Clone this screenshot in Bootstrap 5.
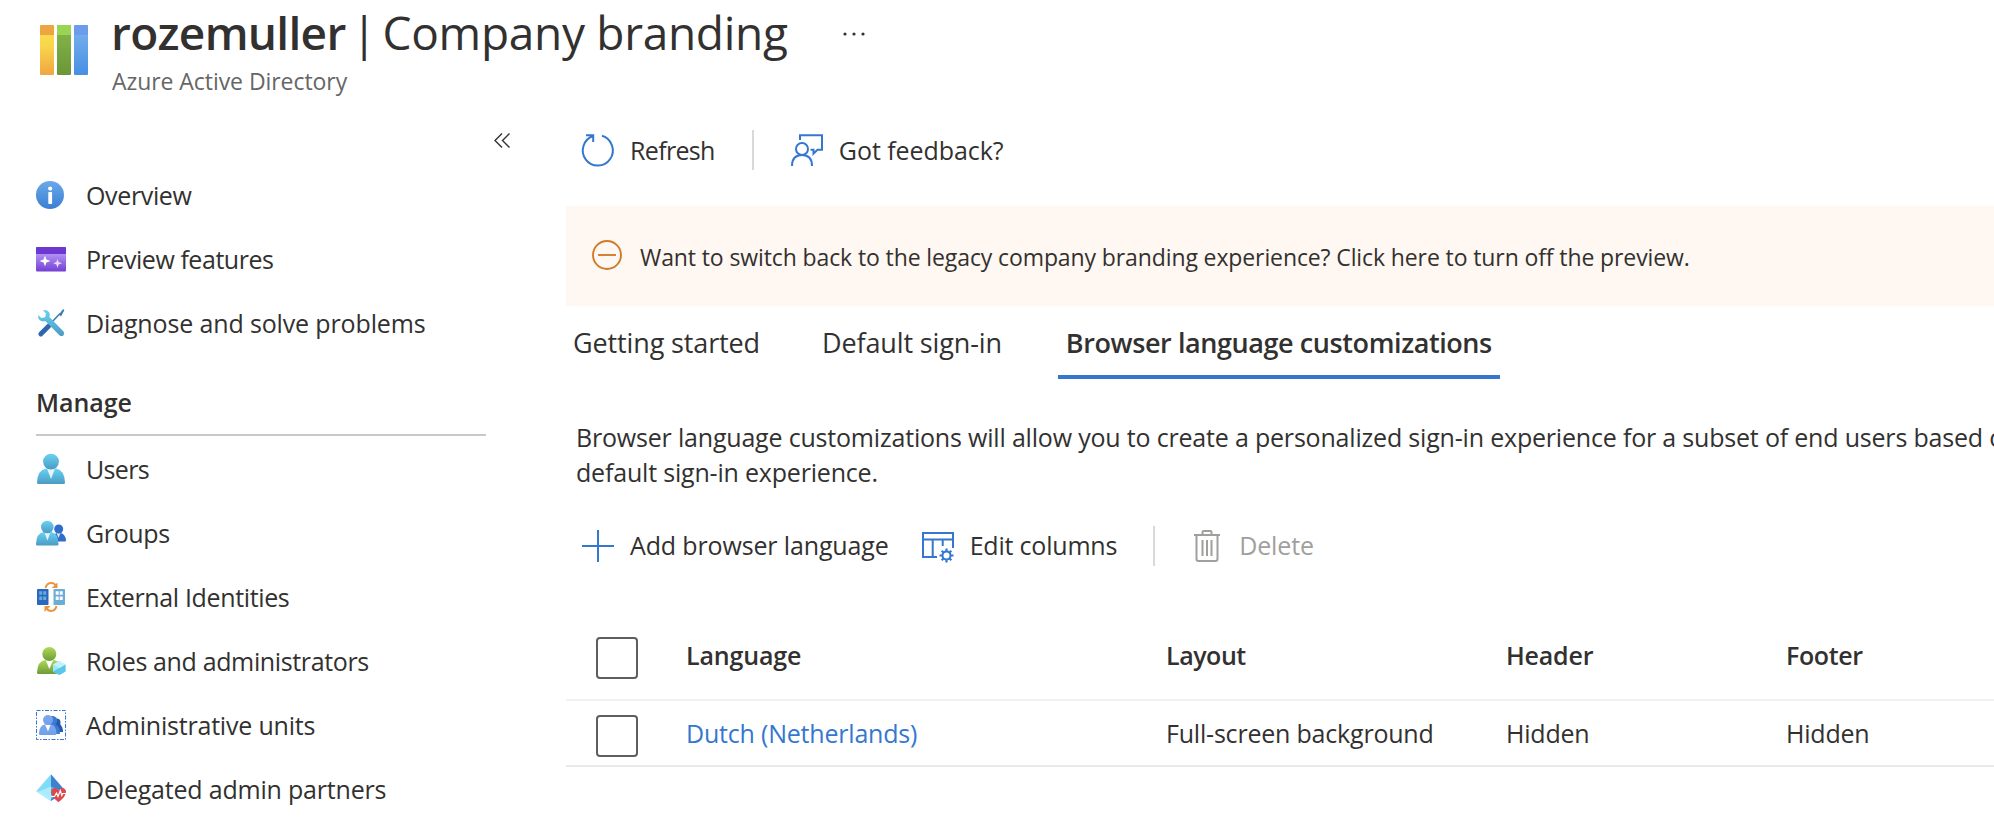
<!DOCTYPE html>
<html lang="en">
<head>
<meta charset="utf-8">
<meta name="viewport" content="width=device-width, initial-scale=1">
<title>rozemuller | Company branding</title>
<link href="https://cdn.jsdelivr.net/npm/bootstrap@5.3.0/dist/css/bootstrap.min.css" rel="stylesheet">
<style>
body{font-family:"Open Sans",sans-serif;font-size:25px;color:#323130;background:#fff;overflow:hidden;height:826px;letter-spacing:-.2px}
svg{display:block;flex:none}
.ls-0{letter-spacing:-.05px}
.ls-1{letter-spacing:-.14px}
.ls-3{letter-spacing:-.36px}
.ls-4{letter-spacing:-.45px}
.ls-6{letter-spacing:-.66px}
.page-head{height:98px;padding-left:40px}
.page-logo{margin:25px 23px 0 0}
.page-title{font-size:46px;line-height:64px;font-weight:400;letter-spacing:-.3px}
.page-title b{font-weight:600;letter-spacing:-.7px}
.page-title .bar{width:37px;text-align:center}
.page-title svg{margin-left:54px;margin-top:4px}
.page-sub{font-size:23px;line-height:34px;color:#666;padding-left:1px;letter-spacing:-.06px}
.side{width:566px;flex:none}
.side-fold{height:65px;padding:35px 0 0 494px}
.side-link{height:64px;padding-left:36px;color:#323130;text-decoration:none}
.side-link svg{margin-right:20px;width:30px;height:30px;overflow:visible}
.side-link span{padding-top:1px}
.side-title{margin:24px 80px 1px 36px;height:57px;font-size:25px;line-height:47px;border-bottom:2px solid #c8c8c8;letter-spacing:-.05px}
.main-pane{min-width:0}
.cmds{height:104px;padding-left:16px}
.cmds.lower{height:60px;margin-top:26px}
.cmd{border:0;background:none;padding:0;color:inherit;letter-spacing:inherit}
.cmd svg{margin-right:16px;overflow:visible}
.cmds:not(.lower) .cmd span{padding-top:2px}
.cmd.off{color:#a19f9d}
.sep{width:2px;height:40px;background:#d9d9d9}
.notice{height:100px;margin-top:4px;background:#fff7f1;padding-left:26px;font-size:23px;letter-spacing:-.11px}
.notice svg{margin:-2px 18px 0 0}
.notice span{padding-top:3px}
.tabs{height:73px}
.tab{font-size:27px;padding:6px 8px 0;border-bottom:4px solid transparent;letter-spacing:-.13px}
.tab.on{border-color:#3577d0;letter-spacing:-.41px}
.intro{margin:41px 0 0 10px;line-height:35px;letter-spacing:-.19px}
.grid-tbl{table-layout:fixed;width:1428px;margin:35px 0 0}
.grid-tbl th,.grid-tbl td{padding:0;vertical-align:middle;line-height:35px;color:#323130;font-weight:400}
.grid-tbl th{font-weight:600}
.grid-tbl thead tr{height:89px;border-bottom:2px solid #f1f1f1}
.grid-tbl tbody tr{height:66px;border-bottom:2px solid #eaeaea}
.grid-tbl a{color:#3577d0;text-decoration:none}
.box{display:block;width:42px;height:42px;border:2px solid #605e5c;border-radius:4px;margin:5px 0 0 30px}
thead .box{margin-top:6px}
</style>
</head>
<body>
<header class="page-head d-flex align-items-start">
  <svg class="page-logo" width="48" height="50" viewBox="0 0 48 50">
    <defs>
      <linearGradient id="gy" x1="0" y1="0" x2="0" y2="1"><stop offset="0" stop-color="#f9de4c"/><stop offset=".4" stop-color="#f8d84b"/><stop offset="1" stop-color="#f0a542"/></linearGradient>
      <linearGradient id="gg" x1="0" y1="0" x2="0" y2="1"><stop offset="0" stop-color="#86b94a"/><stop offset="1" stop-color="#6a9637"/></linearGradient>
      <linearGradient id="gb" x1="0" y1="0" x2="0" y2="1"><stop offset="0" stop-color="#7cb4ee"/><stop offset="1" stop-color="#468fe2"/></linearGradient>
      <linearGradient id="gi" x1="0" y1="0" x2="0" y2="1"><stop offset="0" stop-color="#6aa9e9"/><stop offset="1" stop-color="#3b7fd3"/></linearGradient>
      <linearGradient id="gp" x1="0" y1="0" x2="0" y2="1"><stop offset="0" stop-color="#b79af5"/><stop offset=".3" stop-color="#b08ff2"/><stop offset="1" stop-color="#7440d4"/></linearGradient>
      <linearGradient id="gc" x1="0" y1="0" x2="0" y2="1"><stop offset="0" stop-color="#68d3f3"/><stop offset="1" stop-color="#4b9ac3"/></linearGradient>
      <linearGradient id="gr" x1="0" y1="0" x2="0" y2="1"><stop offset="0" stop-color="#b0da57"/><stop offset="1" stop-color="#6d9b38"/></linearGradient>
      <linearGradient id="ga" x1="0" y1="0" x2="0" y2="1"><stop offset="0" stop-color="#7fa9ea"/><stop offset="1" stop-color="#6f9fec"/></linearGradient>
    </defs>
    <rect width="14" height="50" rx="1" fill="url(#gy)"/><path fill="#eea440" d="M1 0h12l1 1v9H0V1z"/>
    <rect x="17" width="14" height="50" rx="1" fill="url(#gg)"/><path fill="#99d553" d="M18 0h12l1 1v9H17V1z"/>
    <rect x="34" width="14" height="50" rx="1" fill="url(#gb)"/><path fill="#6c9ceb" d="M35 0h12l1 1v9H34V1z"/>
  </svg>
  <div>
    <h1 class="page-title d-flex align-items-center m-0"><b>rozemuller</b><span class="bar">|</span><span>Company branding</span>
      <svg width="24" height="6" viewBox="0 0 24 6" fill="#323130"><circle cx="3" cy="3" r="1.6"/><circle cx="12" cy="3" r="1.6"/><circle cx="21" cy="3" r="1.6"/></svg>
    </h1>
    <div class="page-sub">Azure Active Directory</div>
  </div>
</header>

<div class="d-flex">
  <nav class="side">
    <div class="side-fold"><svg width="17" height="15" viewBox="0 0 17 15" fill="none" stroke="#323130" stroke-width="1.4"><path d="M8 .5l-7 7 7 7M15.500 .5l-7 7 7 7"/></svg></div>

    <a class="side-link d-flex align-items-center">
      <svg viewBox="0 0 30 30"><circle cx="14" cy="15" r="14" fill="url(#gi)"/><circle cx="14.200" cy="8.600" r="2.100" fill="#fff"/><rect x="12.300" y="12" width="3.800" height="12" rx=".8" fill="#fff"/></svg>
      <span class="ls-3">Overview</span></a>
    <a class="side-link d-flex align-items-center">
      <svg viewBox="0 0 30 30"><rect y="3" width="30" height="24.500" rx="1" fill="url(#gp)"/><path fill="#6d38cf" d="M0 4q0-1 1-1h28q1 0 1 1v6H0z"/><path fill="#fff" d="M9 11.500l1.400 4.100 4.100 1.400-4.100 1.400L9 22.500l-1.400-4.100L3.500 17l4.100-1.400z"/><path fill="#e6dbfb" d="M21.500 15l1.100 3.100 3.400 1.100-3.400 1.200-1.100 3.600-1.100-3.600-3.100-1.200 3.100-1.100z"/></svg>
      <span class="ls-4">Preview features</span></a>
    <a class="side-link d-flex align-items-center">
      <svg viewBox="0 0 30 30"><path stroke="#2f67ae" stroke-width="4.800" stroke-linecap="round" d="M4.800 26l8-8"/><path stroke="#3a7fb4" stroke-width="1.600" d="M16 14l8-8.500"/><path fill="#3a7fa8" d="M27.800 1.200l.4 1.200-3.200 6-2-2 3.700-4.800z"/><path fill="url(#gc)" d="M7 2.300Q11.500 1 13.300 4.500q1 2.500.1 4.500l14.100 14.500q1.500 2 0 3.700-2 1.800-4 0L9.200 13Q6 14.200 3.500 12 1.600 10 2.200 7l3 3 4-.8.700-3.600z"/></svg>
      <span class="ls-1">Diagnose and solve problems</span></a>

    <h2 class="side-title fw-semibold">Manage</h2>

    <a class="side-link d-flex align-items-center">
      <svg viewBox="0 0 30 30"><path fill="url(#gc)" d="M1 28.500Q1.500 16 10 14.500h10Q28.500 16 29 28.500q0 1.500-1.500 1.500h-25Q1 30 1 28.500z"/><path fill="#e4f5fc" d="M11 14.500h8L15 25z"/><circle cx="15" cy="7.600" r="7.900" fill="url(#gc)"/></svg>
      <span class="ls-6">Users</span></a>
    <a class="side-link d-flex align-items-center">
      <svg viewBox="0 0 30 30"><path fill="#2e6dcb" d="M17 23.500q.5-8 4-8.500h3.500q5 1 5.500 7.500 0 1-1 1z"/><path fill="#d7e5f8" d="M20.500 15h4l-2 5z"/><circle cx="22.700" cy="11" r="4.500" fill="#2e6dcb"/><path fill="url(#gc)" d="M0 26Q.5 15 7.500 14h8q6.500 1 7 12 0 1.500-1.300 1.500H1.300Q0 27.500 0 26z"/><path fill="#e4f5fc" d="M8.300 14h6.200l-3.100 8.500z"/><circle cx="11.300" cy="9" r="6.300" fill="url(#gc)"/></svg>
      <span class="ls-3">Groups</span></a>
    <a class="side-link d-flex align-items-center">
      <svg viewBox="0 0 30 30"><rect x="1" y="7" width="11.500" height="16" rx=".8" fill="#2a68bd"/><path fill="#68a9dc" d="M3.200 9.200h3v3.600h-3zM7.200 9.200h3v3.600h-3zM3.200 14.500h3v3.600h-3zM7.200 14.500h3v3.600h-3z"/><rect x="17.500" y="7" width="11.500" height="16" rx=".8" fill="#6aaed8"/><path fill="#fff" d="M19.700 9.200h3v3.600h-3zM23.700 9.200h3v3.600h-3zM19.700 14.500h3v3.600h-3zM23.700 14.500h3v3.600h-3z"/><path fill="none" stroke="#f0923a" stroke-width="1.900" d="M9.500 6q1-5 6-5 3 0 4.500 3M20.500 24q-1 4.800-5.500 5-3 0-4.600-3"/><path fill="#f0923a" d="M21.500.5V6h-5.700zM8.500 30v-6h6z"/></svg>
      <span class="ls-3">External Identities</span></a>
    <a class="side-link d-flex align-items-center">
      <svg viewBox="0 0 30 30"><path fill="url(#gr)" d="M1 26.500Q1.500 15 9 14h9q7.500 1 8 12.500 0 1.500-1.500 1.500h-22Q1 28 1 26.500z"/><path fill="#fff" d="M9.500 13.500h8L13.300 23z"/><circle cx="13.300" cy="8" r="7" fill="url(#gr)"/><path fill="#9be8fb" d="M23.300 15l6.200 3.400v7L23.300 29l-6.300-3.600v-7z"/><path fill="#5cc6e8" d="M23.300 22l6.200-3.600v7L23.300 29zM17 25.400l6.300-3.400V29z"/><path fill="#c3f1fd" d="M17 18.400L23.300 15l6.200 3.400-6.200 3.600z"/></svg>
      <span class="ls-3">Roles and administrators</span></a>
    <a class="side-link d-flex align-items-center">
      <svg viewBox="0 0 30 30"><rect x=".5" y=".5" width="29" height="29" fill="none" stroke="#3577d0" stroke-dasharray="4 1.500 1.500 1.500"/><path fill="#225cab" d="M15 22l3-8h6q3 3 3 8z"/><circle cx="20.500" cy="12.500" r="4" fill="#225cab"/><path fill="#3c7ad6" d="M11 24l2-10h6q5 2 5 10z"/><circle cx="16.500" cy="10.500" r="4.600" fill="#3c7ad6"/><path fill="url(#ga)" d="M3 23.500Q3.500 15 9 14.200h6q5 .8 5.500 9.300 0 1.500-1.300 1.500H4.300Q3 25 3 23.500z"/><path fill="#fff" d="M9.300 15h5.200L12 21.500z"/><circle cx="12" cy="10" r="5" fill="url(#ga)"/></svg>
      <span>Administrative units</span></a>
    <a class="side-link d-flex align-items-center">
      <svg viewBox="0 0 30 30"><path fill="#7fdcf8" d="M15 .3L0 17.500 15 27z"/><path fill="#3c82cf" d="M15 .3L30 17.500 15 27z"/><path fill="#a9ecfb" d="M15 12.500L1.500 18 15 25z"/><path fill="#68b6ec" d="M15 12.500L28.500 18 15 25z"/><path fill="none" stroke="#c5f1fc" stroke-width="1.300" d="M1 17.500l14 8"/><path fill="#dd4a4c" d="M22.500 28.300Q15 22.500 15 18q.3-3.800 3.900-4 2.500 0 3.700 2.200Q24 14 26.300 14q3.500.3 3.700 4 0 4.500-7.500 10.300z"/><path fill="none" stroke="#fff" stroke-width="1.200" d="M15 22.500h3.500l2-3.500 1.500 3.500 2.300-6 1.500 5 1-2H30"/></svg>
      <span>Delegated admin partners</span></a>
  </nav>

  <main class="main-pane flex-fill">
    <div class="cmds d-flex align-items-center">
      <button class="cmd d-flex align-items-center"><svg width="32" height="32" viewBox="0 0 32 32" fill="none" stroke="#3577d0" stroke-width="2"><path d="M20 1.800A15 15.200 0 1 1 11 2M4 1.200h7.200V8"/></svg><span class="ls-6">Refresh</span></button>
      <span class="sep" style="margin:0 37px"></span>
      <button class="cmd d-flex align-items-center"><svg width="32" height="32" viewBox="0 0 32 32" fill="none" stroke="#3577d0" stroke-width="2"><path d="M9 6V1.200h22v14.500h-4.500l-4 4v-4H19.500"/><circle cx="11" cy="15" r="6"/><path d="M1 32q0-11 10-11t10 11"/></svg><span class="ls-0">Got feedback?</span></button>
    </div>

    <div class="notice d-flex align-items-center">
      <svg width="30" height="30" viewBox="0 0 30 30" fill="none" stroke="#d07b2b" stroke-width="1.900"><circle cx="15" cy="15" r="14"/><path d="M6 15h18"/></svg>
      <span>Want to switch back to the legacy company branding experience? Click here to turn off the preview.</span>
    </div>

    <div class="tabs d-flex">
      <div class="tab d-flex align-items-center" style="margin:0 46px 0 -1px">Getting started</div>
      <div class="tab d-flex align-items-center" style="margin-right:48px">Default sign-in</div>
      <div class="tab on d-flex align-items-center fw-semibold">Browser language customizations</div>
    </div>

    <div class="intro text-nowrap">Browser language customizations will allow you to create a personalized sign-in experience for a subset of end users based on<br>default sign-in experience.</div>

    <div class="cmds lower d-flex align-items-center">
      <button class="cmd d-flex align-items-center"><svg width="32" height="32" viewBox="0 0 32 32" stroke="#3577d0" stroke-width="2"><path d="M16 0v32M0 16h32"/></svg><span class="ls-1">Add browser language</span></button>
      <button class="cmd d-flex align-items-center" style="margin-left:33px"><svg width="32" height="32" viewBox="0 0 32 32" fill="none" stroke="#3577d0" stroke-width="2"><path d="M15 27H1V3h30v15M1 9.500h30M10.700 9.500V27M20.700 9.500V16"/><circle cx="24.500" cy="25.500" r="4" /><path stroke-width="2.200" d="M24.500 21.500v-3M24.500 29.500v3M20.500 25.500h-3M28.500 25.500h3M21.700 22.700l-2-2M27.300 28.300l2 2M27.300 22.700l2-2M21.700 28.300l-2 2"/></svg><span>Edit columns</span></button>
      <span class="sep" style="margin:0 36px"></span>
      <button class="cmd off d-flex align-items-center"><svg width="32" height="32" viewBox="0 0 32 32" fill="none" stroke="#a19f9d" stroke-width="2"><path d="M3 5h26M11.500 5V2.200q0-1.200 1.200-1.200h6.600q1.200 0 1.200 1.200V5M5.500 5v24q0 2 2 2h17q2 0 2-2V5M11.500 10v16M16 10v16M20.500 10v16"/></svg><span class="ls-1">Delete</span></button>
    </div>

    <table class="grid-tbl">
      <colgroup><col style="width:120px"><col style="width:480px"><col style="width:340px"><col style="width:280px"><col></colgroup>
      <thead><tr><th><span class="box"></span></th><th class="ls-1">Language</th><th class="ls-4">Layout</th><th>Header</th><th class="ls-3">Footer</th></tr></thead>
      <tbody><tr><td><span class="box"></span></td><td><a href="#">Dutch (Netherlands)</a></td><td>Full-screen background</td><td>Hidden</td><td>Hidden</td></tr></tbody>
    </table>
  </main>
</div>
<script src="https://cdn.jsdelivr.net/npm/bootstrap@5.3.0/dist/js/bootstrap.bundle.min.js"></script>
</body>
</html>
